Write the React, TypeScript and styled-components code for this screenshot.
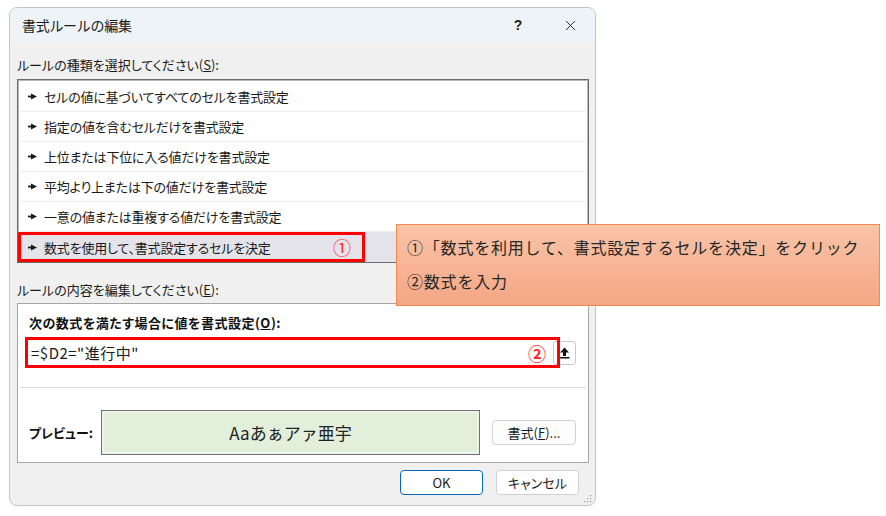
import React from 'react';
import styled, { createGlobalStyle } from 'styled-components';
import { X } from 'lucide-react';

const GlobalStyle = createGlobalStyle`
  body {
    margin: 0;
    background: #ffffff;
    font-family: "Noto Sans CJK JP", "Noto Sans", sans-serif;
    color: #1a1a1a;
  }
`;

const rules = [
  'セルの値に基づいてすべてのセルを書式設定',
  '指定の値を含むセルだけを書式設定',
  '上位または下位に入る値だけを書式設定',
  '平均より上または下の値だけを書式設定',
  '一意の値または重複する値だけを書式設定',
  '数式を使用して、書式設定するセルを決定',
];

function RuleArrow() {
  return (
    <svg width="9" height="7" viewBox="0 0 9 7">
      <rect x="0" y="2.6" width="4" height="1.8" fill="#1a1a1a" />
      <polygon points="3,0.5 9,3.5 3,6.5" fill="#1a1a1a" />
    </svg>
  );
}

function RefIcon() {
  return (
    <svg width="11" height="12" viewBox="0 0 11 12">
      <polygon points="5.5,0.5 10,5.5 7,5.5 7,9 4,9 4,5.5 1,5.5" fill="#111" />
      <rect x="0.5" y="10" width="10" height="1.5" fill="#111" />
    </svg>
  );
}

export default function App() {
  return (
    <>
      <GlobalStyle />
      <Page>
        <Dialog>
          <TitleBar>
            <Title>書式ルールの編集</Title>
            <TitleSpacer />
            <TitleButton $gap={6}>
              <HelpMark>?</HelpMark>
            </TitleButton>
            <TitleButton>
              <X size={17} strokeWidth={1.3} color="#222" />
            </TitleButton>
          </TitleBar>

          <Body>
            <SectionLabel $after={5}>
              ルールの種類を選択してください(<u>S</u>):
            </SectionLabel>
            <RuleList>
              {rules.map((r, i) =>
                i === rules.length - 1 ? (
                  <SelectedRow key={r}>
                    <RedFrame>
                      <RuleText>
                        <RuleArrow />
                        {r}
                      </RuleText>
                      <Mark>①</Mark>
                    </RedFrame>
                  </SelectedRow>
                ) : (
                  <RuleRow key={r}>
                    <RuleText>
                      <RuleArrow />
                      {r}
                    </RuleText>
                  </RuleRow>
                )
              )}
            </RuleList>

            <SectionLabel $before={18} $after={4}>
              ルールの内容を編集してください(<u>E</u>):
            </SectionLabel>

            <Group>
              <GroupLabel>
                次の数式を満たす場合に値を書式設定(<u>O</u>):
              </GroupLabel>
              <FormulaRow>
                <FormulaFrame>
                  <FormulaText>=$D2="進行中"</FormulaText>
                  <Mark $bold>②</Mark>
                </FormulaFrame>
                <RefButton>
                  <RefIcon />
                </RefButton>
              </FormulaRow>
              <Divider />
              <PreviewRow>
                <PreviewLabel>プレビュー:</PreviewLabel>
                <PreviewBox>Aaあぁアァ亜宇</PreviewBox>
                <FormatButton>
                  書式(<u>F</u>)...
                </FormatButton>
              </PreviewRow>
            </Group>

            <Footer>
              <DialogButton $primary>OK</DialogButton>
              <DialogButton>キャンセル</DialogButton>
            </Footer>
          </Body>
          <Grip>
            <svg width="9" height="9" viewBox="0 0 9 9">
              {[
                [7, 1],
                [4, 4],
                [7, 4],
                [1, 7],
                [4, 7],
                [7, 7],
              ].map(([x, y]) => (
                <rect key={`${x}-${y}`} x={x} y={y} width="1.2" height="1.2" fill="#9a9a9a" />
              ))}
            </svg>
          </Grip>
        </Dialog>

        <Callout>
          <CalloutLine>①「数式を利用して、書式設定するセルを決定」をクリック</CalloutLine>
          <CalloutLine>②数式を入力</CalloutLine>
        </Callout>
      </Page>
    </>
  );
}

const Page = styled.div`
  position: relative;
  width: 886px;
  height: 516px;
  padding: 7px 0 0 9px;
  box-sizing: border-box;
`;

const Dialog = styled.div`
  position: relative;
  width: 587px;
  height: 499px;
  box-sizing: border-box;
  border: 1px solid #c4c4c4;
  border-radius: 8px;
  background: #f0f0f0;
  overflow: hidden;
  display: flex;
  flex-direction: column;
  font-feature-settings: "palt";
`;

const TitleBar = styled.div`
  height: 34px;
  flex: none;
  display: flex;
  align-items: center;
  padding: 0 2px 0 12px;
  background: #eef3f8;
`;

const Title = styled.div`
  font-size: 14px;
  color: #1a1a1a;
  font-feature-settings: normal;
  letter-spacing: -0.3px;
`;

const TitleSpacer = styled.div`
  flex: 1;
`;

const TitleButton = styled.div<{ $gap?: number }>`
  width: 46px;
  height: 34px;
  margin-right: ${(p) => p.$gap ?? 0}px;
  display: flex;
  align-items: center;
  justify-content: center;
`;

const HelpMark = styled.span`
  font-family: "Liberation Sans", sans-serif;
  font-size: 14px;
  font-weight: bold;
  color: #222;
`;

const Body = styled.div`
  flex: 1;
  display: flex;
  flex-direction: column;
  padding: 14px 6px 0 7px;
`;

const SectionLabel = styled.div<{ $before?: number; $after?: number }>`
  font-size: 13px;
  line-height: 18px;
  margin-top: ${(p) => p.$before ?? 0}px;
  margin-bottom: ${(p) => p.$after ?? 0}px;
  color: #1a1a1a;
`;

const RuleList = styled.div`
  height: 184px;
  box-sizing: border-box;
  border: 1px solid #6a6a6a;
  box-shadow: inset 0 0 0 1px #b8b8b8;
  background: #fff;
  padding-top: 2px;
  display: flex;
  flex-direction: column;
`;

const RuleRow = styled.div`
  height: 30px;
  box-sizing: border-box;
  margin: 0 2px;
  padding-left: 8px;
  display: flex;
  align-items: center;
  border-bottom: 1px solid #eeeeee;
`;

const SelectedRow = styled.div`
  height: 30px;
  display: flex;
  align-items: stretch;
  background: #e3e3e9;
`;

const RedFrame = styled.div`
  width: 347px;
  box-sizing: border-box;
  border: 3px solid #ff0000;
  padding: 0 11px 0 7px;
  display: flex;
  align-items: center;
  justify-content: space-between;
`;

const RuleText = styled.div`
  display: flex;
  align-items: center;
  gap: 7px;
  font-size: 13px;
  letter-spacing: -0.2px;
  color: #1a1a1a;
`;

const Mark = styled.span<{ $bold?: boolean }>`
  font-size: 18px;
  font-weight: ${(p) => (p.$bold ? 'bold' : 'normal')};
  line-height: 1;
  color: #ff2a2a;
  font-feature-settings: normal;
`;

const Group = styled.div`
  height: 160px;
  box-sizing: border-box;
  border: 1px solid #a5a5a5;
  background: #fff;
  display: flex;
  flex-direction: column;
`;

const GroupLabel = styled.div`
  margin: 10px 0 0 11px;
  font-size: 13px;
  line-height: 18px;
  letter-spacing: 0.5px;
  font-weight: bold;
  color: #111;
`;

const FormulaRow = styled.div`
  margin: 5px 0 0 7px;
  display: flex;
  align-items: center;
`;

const FormulaFrame = styled.div`
  position: relative;
  z-index: 1;
  width: 535px;
  height: 31px;
  box-sizing: border-box;
  border: 3px solid #ff0000;
  padding: 0 11px 0 3px;
  display: flex;
  align-items: center;
  justify-content: space-between;
`;

const FormulaText = styled.span`
  font-size: 15px;
  letter-spacing: 0.5px;
  color: #1a1a1a;
  font-feature-settings: normal;
`;

const RefButton = styled.div`
  width: 23px;
  height: 24px;
  margin-left: -7px;
  box-sizing: border-box;
  border: 1px solid #c8c8c8;
  border-radius: 3px;
  background: #fff;
  display: flex;
  align-items: center;
  justify-content: center;
`;

const Divider = styled.div`
  margin: 19px 2px 0;
  border-top: 1px solid #d9d9d9;
`;

const PreviewRow = styled.div`
  margin-top: 22px;
  padding-left: 11px;
  display: flex;
  align-items: center;
`;

const PreviewLabel = styled.div`
  width: 72px;
  font-size: 13px;
  font-weight: bold;
  color: #111;
`;

const PreviewBox = styled.div`
  width: 379px;
  height: 45px;
  box-sizing: border-box;
  border: 1px solid #707070;
  box-shadow: inset 0 0 0 2px #eef5ea;
  background: #e2efda;
  display: flex;
  align-items: center;
  justify-content: center;
  font-size: 17px;
  color: #222;
  font-feature-settings: normal;
`;

const Button = styled.div`
  height: 25px;
  box-sizing: border-box;
  border: 1px solid #d0d0d0;
  border-radius: 4px;
  background: #fdfdfd;
  display: flex;
  align-items: center;
  justify-content: center;
  font-size: 13px;
  color: #1a1a1a;
`;

const FormatButton = styled(Button)`
  width: 84px;
  margin-left: 12px;
`;

const Footer = styled.div`
  margin-top: 7px;
  padding-right: 10px;
  display: flex;
  justify-content: flex-end;
  gap: 13px;
`;

const DialogButton = styled(Button)<{ $primary?: boolean }>`
  width: 83px;
  border-color: ${(p) => (p.$primary ? '#0067c0' : '#d0d0d0')};
  background: #ffffff;
`;

const Grip = styled.div`
  position: absolute;
  right: 3px;
  bottom: 2px;
  display: flex;
`;

const Callout = styled.div`
  position: absolute;
  left: 396px;
  top: 224px;
  width: 484px;
  height: 82px;
  box-sizing: border-box;
  border: 1.5px solid #f08a4f;
  background: linear-gradient(180deg, #f9c4a8 0%, #f5a684 100%);
  padding: 5px 0 0 10px;
  display: flex;
  flex-direction: column;
`;

const CalloutLine = styled.div`
  font-size: 16px;
  line-height: 34px;
  letter-spacing: 0.8px;
  color: #262626;
  white-space: nowrap;
`;
